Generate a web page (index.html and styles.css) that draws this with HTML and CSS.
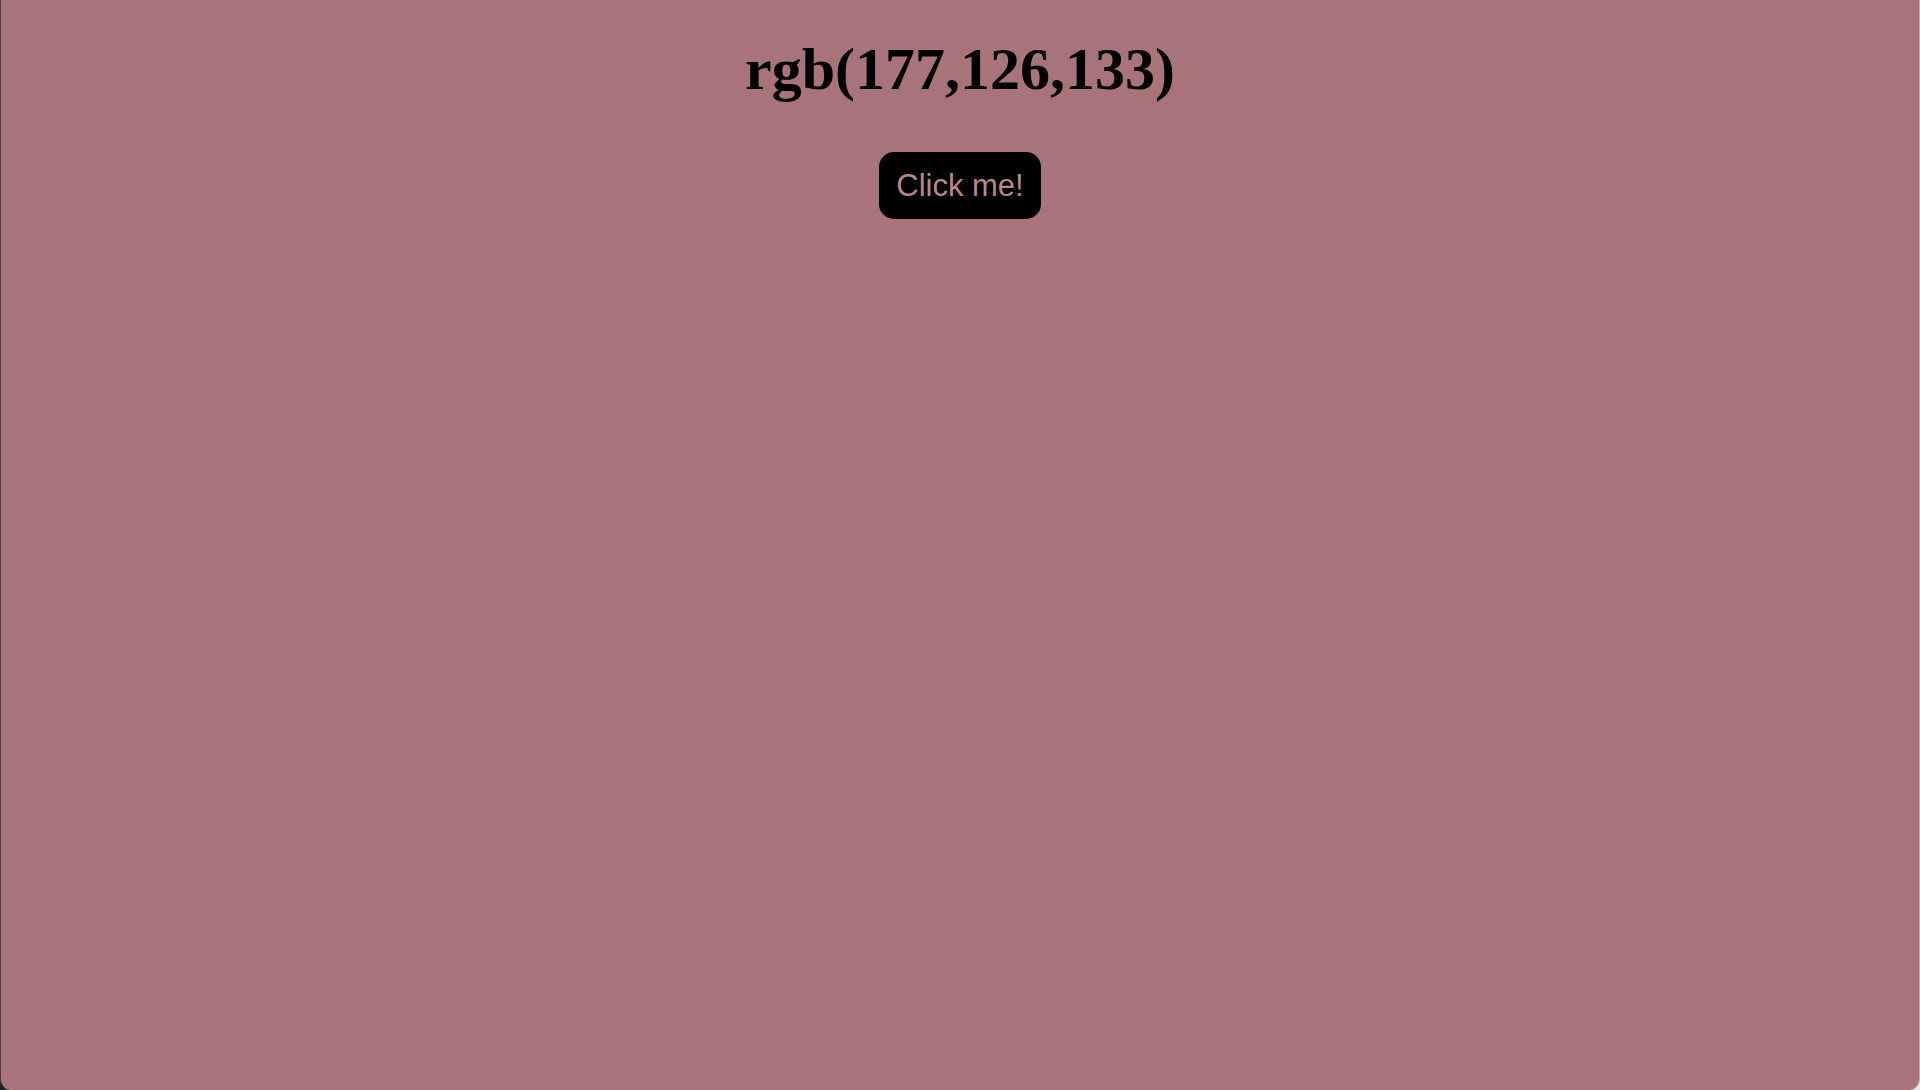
FILE: index.html
```html
<!DOCTYPE html>
<html>
<head>
<meta charset="utf-8">
<link rel="stylesheet" href="styles.css">
</head>
<body>
<div class="window">
  <h1 class="title">rgb(177,126,133)</h1>
  <button class="btn">Click me!</button>
</div>
</body>
</html>
```
FILE: styles.css
```css
html, body {
  margin: 0;
  padding: 0;
  height: 100%;
}
body {
  background: linear-gradient(to right, #222 0, #222 50%, #e8e8e8 50%, #e8e8e8 100%);
}
.window {
  box-sizing: border-box;
  height: 1090px;
  background: #a87479;
  border-left: 1px solid #4a3a3c;
  border-right: 1px solid #c9a9ad;
  border-radius: 0 0 11px 11px;
  display: flex;
  flex-direction: column;
  align-items: center;
  padding-top: 35px;
}
.title {
  margin: 0;
  font-family: "Liberation Serif", "Times New Roman", serif;
  font-weight: bold;
  font-size: 60px;
  color: #000;
  line-height: 69px;
}
.btn {
  margin-top: 48px;
  background: #000;
  color: #b8868d;
  border: none;
  border-radius: 15px;
  font-family: "Liberation Sans", Arial, sans-serif;
  font-size: 31px;
  padding: 16px 17px;
  line-height: 35px;
  cursor: pointer;
}
```
